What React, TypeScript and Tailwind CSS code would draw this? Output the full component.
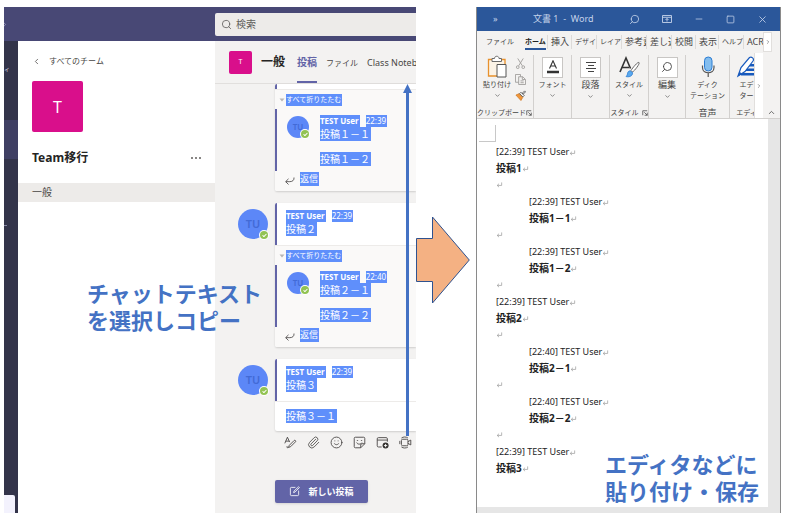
import type { ReactNode } from "react"
import { ChevronDown, ChevronLeft, ChevronRight, ChevronUp, Check, Minus, Paperclip, Search, Smile, Square, X } from "lucide-react"

const selected = "bg-[#5f8ffb] text-white pr-px"

// ---------- Teams ----------

function Avatar({ small = false }: { small?: boolean }) {
    return (
        <div
            className={
                small
                    ? "relative mt-px flex size-[22px] shrink-0 items-center justify-center rounded-full bg-[#5c87f7] text-[8px] font-semibold text-[#426ad6]"
                    : "relative mt-[6px] flex size-[30px] shrink-0 items-center justify-center rounded-full bg-[#5c87f7] text-[11px] font-semibold text-[#426ad6]"
            }
        >
            TU
            <span className="absolute right-0 bottom-0 flex size-2 items-center justify-center rounded-full bg-[#92c353] text-white ring-1 ring-white">
                <Check className="size-[5px]" strokeWidth={5} />
            </span>
        </div>
    )
}

function Message({ time, lines }: { time: string; lines: string[] }) {
    return (
        <div className="whitespace-nowrap">
            <div className="flex h-3 gap-[6px] text-[8px] leading-3">
                <span className={`${selected} font-bold`}>TEST User</span>
                <span className={selected}>{time}</span>
            </div>
            <div className="flex flex-col items-start gap-[11px] text-[10px] leading-[14px]">
                {lines.map((line) => (
                    <span key={line} className={selected}>{line}</span>
                ))}
            </div>
        </div>
    )
}

function Replies({ time, lines }: { time: string; lines: string[] }) {
    return (
        <div className="border-t border-[#edebe9] bg-[#faf9f8]">
            <button className="flex h-[19px] items-center gap-px pl-1 text-[7px] leading-3 whitespace-nowrap">
                <svg viewBox="0 0 6 4" className="w-[6px] fill-[#b8b6b4]"><path d="M0.5 0.5h5L3 3.5z" /></svg>
                <span className={selected}>すべて折りたたむ</span>
            </button>
            <div className="flex gap-[11px] border-l-2 border-[#6264a7] pt-[6px] pb-[5px] pl-[10px]">
                <Avatar small />
                <Message time={time} lines={lines} />
            </div>
            <button className="flex h-5 items-start gap-[5px] pt-px pl-[10px] text-[9px] leading-[14px]">
                <svg viewBox="0 0 12 10" className="mt-1 h-[10px] w-[10px] fill-none stroke-[#484644]" strokeWidth="1">
                    <path d="M10.8 0.8c.4 3.2-1.8 5-5 5H1M4.2 2.4 0.8 5.8l3.4 3.4" />
                </svg>
                <span className={selected}>返信</span>
            </button>
        </div>
    )
}

function Post({ avatar = true, children }: { avatar?: boolean; children: ReactNode }) {
    return (
        <article className="flex gap-[7px] pl-[23px]">
            {avatar ? <Avatar /> : <div className="w-[30px] shrink-0" />}
            <div className="min-w-0 flex-1 overflow-hidden rounded-l-xs bg-white shadow-[0_1px_2px_rgba(0,0,0,0.15)]">
                {children}
            </div>
        </article>
    )
}

function PostHead({ text, time }: { text: string; time: string }) {
    return (
        <div className="h-[42px] border-l-2 border-[#6264a7] pt-[7px] pl-[9px]">
            <Message time={time} lines={[text]} />
        </div>
    )
}

function ComposeTools() {
    const icon = "size-[13px] fill-none stroke-current"
    return (
        <div className="flex gap-[10px] pt-[5px] pl-[69px] text-[#484644]">
            <button aria-label="書式">
                <svg viewBox="0 0 16 16" className={icon} strokeWidth="1.1">
                    <path d="M1 9 4.2 1.5 7 7.5M2.2 6.3h4M6.5 11.5l6-6c.9-.9 2.6.6 1.7 1.6l-6 6-2.6 1zM4 12.5c-1.5 1.6.2 2.4 1.5 1.5" />
                </svg>
            </button>
            <button aria-label="添付"><Paperclip className="size-[13px]" strokeWidth={1.5} /></button>
            <button aria-label="絵文字"><Smile className="size-[13px]" strokeWidth={1.6} /></button>
            <button aria-label="ステッカー">
                <svg viewBox="0 0 16 16" className={icon} strokeWidth="1.1">
                    <path d="M3 1.5h10c1 0 1.5.5 1.5 1.5v6.5l-5 5H3c-1 0-1.5-.5-1.5-1.5V3c0-1 .5-1.5 1.5-1.5zM14.5 9.5H11c-1 0-1.5.5-1.5 1.5v3.5M4.5 8c1 2.5 4.5 2.8 6.5.2" />
                    <path d="M5.5 5v.8M10.5 5v.8" strokeWidth="1.6" />
                </svg>
            </button>
            <button aria-label="会議">
                <svg viewBox="0 0 16 16" className={icon} strokeWidth="1.1">
                    <path d="M7 13.5H3c-1 0-1.5-.5-1.5-1.5V3.5C1.5 2.5 2 2 3 2h9.5c1 0 1.5.5 1.5 1.5V7M1.5 5H14" />
                    <circle cx="11.8" cy="11.8" r="3.7" className="fill-[#33322f] stroke-none" />
                    <path d="M11.8 9.8v4M9.8 11.8h4" className="stroke-white" />
                </svg>
            </button>
            <button aria-label="ビデオ">
                <svg viewBox="0 0 16 16" className={icon} strokeWidth="1.1">
                    <path d="M4.5 4h5c1 0 1.5.5 1.5 1.5v5c0 1-.5 1.5-1.5 1.5h-5c-1 0-1.5-.5-1.5-1.5v-5C3 4.5 3.5 4 4.5 4zM11 7l3.5-2v6L11 9M3 2.5C5 .8 9 .8 11 2.5M3 13.5c2 1.7 6 1.7 8 0M1 6v4" />
                </svg>
            </button>
        </div>
    )
}

function Teams() {
    return (
        <section className="relative flex min-w-0 flex-1 flex-col">
            <header className="flex h-[34px] items-center justify-between overflow-hidden bg-[#484875]">
                <ChevronRight className="-ml-1 size-[9px] text-[#a9a9cc]" />
                <label className="flex h-[23px] w-[201px] items-center gap-1 rounded-l-xs bg-[#edebe9] pl-[6px]">
                    <Search className="size-[11px] shrink-0 text-[#605e5c]" strokeWidth={1.8} />
                    <input aria-label="検索" placeholder="検索" className="min-w-0 flex-1 bg-transparent text-[10px] outline-none placeholder:text-[#605e5c]" />
                </label>
            </header>

            <div className="flex flex-1">
                <nav className="flex w-[14px] shrink-0 flex-col overflow-hidden bg-[#33344a] text-[6px] text-[#c8c8dc]">
                    <div className="h-[79px] pt-[22px] leading-3">ィ</div>
                    <div className="h-[39px] bg-[#3f3f63]" />
                    <div className="mt-[66px] h-px w-[3px] bg-[#8889a5]" />
                    <div className="mt-auto h-[18px] w-[11px] rounded-tr-xs bg-[#f3f2fd]" />
                </nav>

                <aside className="min-w-0 flex-1 bg-white text-[#252423]">
                    <a href="#teams" className="flex h-10 items-center gap-2 pl-[14px] text-[8px] text-[#484644]">
                        <ChevronLeft className="size-[9px]" />
                        すべてのチーム
                    </a>
                    <div className="ml-[14px] flex size-[51px] items-center justify-center rounded-xs bg-[#d90f8b] text-base text-white">T</div>
                    <div className="flex h-[51px] items-center justify-between px-[14px]">
                        <h2 className="text-xs font-bold">Team移行</h2>
                        <button aria-label="その他" className="flex gap-[2px]">
                            <i className="size-[2px] rounded-full bg-[#605e5c]" />
                            <i className="size-[2px] rounded-full bg-[#605e5c]" />
                            <i className="size-[2px] rounded-full bg-[#605e5c]" />
                        </button>
                    </div>
                    <a href="#general" className="flex h-[19px] items-center bg-[#edebe9] pl-[14px] text-[10px] text-[#484644]">一般</a>
                </aside>

                <main className="relative flex w-[201px] shrink-0 flex-col overflow-hidden bg-[#f3f2f1]">
                    <div className="flex h-[43px] items-center border-b border-[#e1dfdd] pl-[14px] whitespace-nowrap">
                        <div className="flex size-[23px] shrink-0 items-center justify-center rounded-xs bg-[#d90f8b] text-[7px] text-white">T</div>
                        <h1 className="ml-[9px] text-xs font-bold text-[#252423]">一般</h1>
                        <nav className="ml-3 flex h-full gap-[9px] text-[9px] text-[#484644]">
                            <a href="#posts" className="flex items-center border-b-2 border-[#6264a7] pt-[3px] text-[10px] font-bold text-[#6264a7]">投稿</a>
                            <a href="#files" className="flex items-center pt-[2px] text-[8px]">ファイル</a>
                            <a href="#notebook" className="flex items-center pt-[2px]">Class Notebook</a>
                        </nav>
                    </div>

                    <div className="flex flex-col gap-3">
                        <Post avatar={false}>
                            <div className="h-[5px] border-l-2 border-[#6264a7]" />
                            <Replies time="22:39" lines={["投稿１－１", "投稿１－２"]} />
                        </Post>
                        <Post>
                            <PostHead text="投稿２" time="22:39" />
                            <Replies time="22:40" lines={["投稿２－１", "投稿２－２"]} />
                        </Post>
                        <Post>
                            <PostHead text="投稿３" time="22:39" />
                            <div className="flex border-t border-[#edebe9] pt-[7px] pb-2 pl-[11px] text-[10px] leading-[14px]">
                                <span className={selected}>投稿３－１</span>
                            </div>
                        </Post>
                    </div>
                    <ComposeTools />

                    <button className="mt-[31px] ml-[60px] flex h-[23px] w-[93px] items-center justify-center gap-2 rounded-xs bg-[#6264a7] text-[9px] font-bold text-white shadow-sm">
                        <svg viewBox="0 0 12 12" className="size-[11px] fill-none stroke-white" strokeWidth="0.9">
                            <path d="M7 1.5H2.5c-.6 0-1 .4-1 1v7c0 .6.4 1 1 1h7c.6 0 1-.4 1-1V5M5 7.2l.5-1.7L10.5.8l.9.9L6.6 6.6z" />
                        </svg>
                        新しい投稿
                    </button>

                    {/* 選択範囲を示す矢印 */}
                    <svg viewBox="0 0 9 352" className="absolute top-[43px] left-[188px] h-[352px] w-[9px] fill-[#4472c4]">
                        <path d="M4.5 0 9 9H6v343H3V9H0z" />
                    </svg>
                </main>
            </div>

            <p className="absolute top-[273px] left-[83px] text-[22px] leading-[27px] font-bold whitespace-nowrap text-[#4472c4]">
                チャットテキスト
                <br />
                を選択しコピー
            </p>
        </section>
    )
}

// ---------- Word ----------

const ribbonTabs = [
    { label: "挿入", style: "w-[24px] text-[9px]" },
    { label: "デザイ", style: "w-[25px] text-[7px]" },
    { label: "レイア", style: "w-[25px] text-[7px]" },
    { label: "参考資", style: "w-[25px] text-[9px]" },
    { label: "差し込", style: "w-[25px] text-[9px]" },
    { label: "校閲", style: "w-[24px] text-[9px]" },
    { label: "表示", style: "w-[23px] text-[9px]" },
    { label: "ヘルプ", style: "w-[25px] text-[7px]" },
    { label: "ACR", style: "w-[21px] text-[9px]" },
]

const documentText = [
    { time: "22:39", text: "投稿1" },
    { time: "22:39", text: "投稿1－1", indent: true },
    { time: "22:39", text: "投稿1－2", indent: true },
    { time: "22:39", text: "投稿2" },
    { time: "22:40", text: "投稿2－1", indent: true },
    { time: "22:40", text: "投稿2－2", indent: true },
    { time: "22:39", text: "投稿3", last: true },
]

function Return() {
    return (
        <svg viewBox="0 0 8 7" className="inline h-[6px] w-[7px] fill-none stroke-[#979797]" strokeWidth="0.8">
            <path d="M6.5 0.5v3.5H1.5M3.5 2 1.3 4l2.2 2" />
        </svg>
    )
}

function Launcher() {
    return (
        <svg viewBox="0 0 8 8" className="size-[6px] shrink-0 fill-none stroke-[#444]" strokeWidth="1">
            <path d="M1 7V1h6M3 3l4 4M7 3.5V7H3.5" />
        </svg>
    )
}

function Group({ width, icon, label, caption, launcher, arrow }: {
    width: string; icon: ReactNode; label: ReactNode; caption?: ReactNode; launcher?: boolean; arrow?: boolean
}) {
    return (
        <div className={`${width} flex shrink-0 flex-col overflow-hidden border-r border-[#d2d0ce]`}>
            <button className="flex flex-col items-center whitespace-nowrap">
                <span className="flex h-[24px] items-center justify-center">{icon}</span>
                <span className="leading-[11px]">{label}</span>
                {arrow && <ChevronDown className="mt-[2px] size-[7px]" />}
            </button>
            <div className="mt-auto flex h-[10px] items-center justify-center gap-[3px] whitespace-nowrap">
                {caption}
                {launcher && <Launcher />}
            </div>
        </div>
    )
}

function Ribbon() {
    const box = "flex size-[21px] items-center justify-center border border-[#c8c6c4] bg-white"
    return (
        <div className="flex h-[66px] border-b border-[#d2d0ce] text-[7px] text-[#444]">
            <div className="flex min-w-0 flex-1 overflow-hidden pt-[2px]">
                {/* クリップボード */}
                <div className="flex w-[57px] shrink-0 flex-col border-r border-[#d2d0ce]">
                    <div className="flex gap-1 pl-[6px]">
                        <button className="flex flex-col items-center whitespace-nowrap">
                            <svg viewBox="0 0 22 24" className="h-[24px] w-[22px] fill-white" strokeWidth="1.3">
                                <path d="M11 21H2.500V4.500H19V9.500" className="fill-[#fbf3e6] stroke-[#e8912d]" />
                                <path d="M6 6.500V3.500h2.500c0-3 4.500-3 4.500 0h2.500v3z" className="stroke-[#6b6b6b]" strokeWidth="1" />
                                <path d="M11 9.500h9v12.500H11z" className="stroke-[#555]" strokeWidth="1" />
                            </svg>
                            <span className="leading-[11px]">貼り付け</span>
                            <ChevronDown className="mt-[2px] size-[7px]" />
                        </button>
                        <div className="flex flex-col items-center gap-[5px] pt-[3px]">
                            <button aria-label="切り取り">
                                <svg viewBox="0 0 12 12" className="size-[11px] fill-none stroke-[#a19f9d]" strokeWidth="1">
                                    <path d="M3 .5 8 8.5M9 .5 4 8.5" />
                                    <circle cx="3" cy="10" r="1.5" />
                                    <circle cx="9" cy="10" r="1.5" />
                                </svg>
                            </button>
                            <button aria-label="コピー">
                                <svg viewBox="0 0 12 12" className="size-[11px] fill-[#f3f2f1] stroke-[#a19f9d]" strokeWidth="1">
                                    <path d="M.5.5h5.5v8.5H.5z" />
                                    <path d="M4 3h4.5L11.5 6v5.5H4zM8 3v3h3M6 7.5h3.5M6 9.5h3.5" />
                                </svg>
                            </button>
                            <button aria-label="書式のコピー">
                                <svg viewBox="0 0 12 12" className="size-[11px]">
                                    <path d="M1 5.5 4.5 4 8.5 8 6.5 11.5z" className="fill-[#f0963a] stroke-[#c96d13]" strokeWidth=".7" />
                                    <path d="m5 4 1.5-1.5 3.5 3.5L8.5 7.5zM8 3.5 10.5 1 11.5 2 9 4.5z" className="fill-white stroke-[#444]" strokeWidth=".9" />
                                </svg>
                            </button>
                        </div>
                    </div>
                    <div className="mt-auto flex h-[10px] items-center justify-between pr-px whitespace-nowrap">
                        クリップボード
                        <Launcher />
                    </div>
                </div>

                <Group width="w-[38px]" label="フォント" arrow icon={
                    <span className={box}>
                        <svg viewBox="0 0 14 14" className="size-[14px] fill-none stroke-[#333]">
                            <path d="M3.5 8.5 7 .8l3.5 7.7M4.7 6h4.6" strokeWidth="1.1" />
                            <path d="M1 12h12" strokeWidth="2.5" />
                        </svg>
                    </span>
                } />
                <Group width="w-[38px]" label={<span className="text-[9px]">段落</span>} arrow icon={
                    <span className={box}>
                        <svg viewBox="0 0 12 12" className="size-3 fill-none stroke-[#444]"><path d="M1 1.5h10M3 4.5h6M1 7.5h10M3 10.5h6" /></svg>
                    </span>
                } />
                <Group width="w-[39px]" label="スタイル" caption="スタイル" launcher arrow icon={
                    <svg viewBox="0 0 22 22" className="size-[22px] fill-none">
                        <path d="M2 16 8 2l4.500 10.500M4.500 11.500H11" className="stroke-[#333]" strokeWidth="1.600" />
                        <path d="M21 6.500c1.200 1-4.500 8.500-6.500 9.500L13 14.500c1.500-2.500 6.800-9 8-8z" className="fill-white stroke-[#555]" strokeWidth=".9" />
                        <path d="M8 20.500c2 .8 7 .2 6.500-4L12 14.800C8.500 15.500 10.500 18.500 8 20.500z" className="fill-[#5aa9ee] stroke-[#2b7cd3]" strokeWidth=".8" />
                    </svg>
                } />
                <Group width="w-[37px]" label={<span className="text-[9px]">編集</span>} arrow icon={
                    <span className={box}><Search className="size-3 -scale-x-100" strokeWidth={1.8} /></span>
                } />
                <Group width="w-[44px]" label={<>ディク<br />テーション</>} caption={<span className="text-[9px]">音声</span>} icon={
                    <svg viewBox="0 0 14 22" className="h-[22px] w-[14px] fill-none">
                        <rect x="3.5" y="1" width="7.5" height="14" rx="3.700" className="fill-[#83bdee] stroke-[#2b7cd3]" />
                        <path d="M1.500 9.500v2c0 7 11.500 7 11.500 0v-2M7.200 17v4" className="stroke-[#555]" strokeWidth="1.200" />
                    </svg>
                } />
                <Group width="w-[34px]" label={<>エデ<br />ター</>} caption="エディ" icon={
                    <svg viewBox="0 0 22 22" className="size-[22px]">
                        <path d="M13 8h9v2.500H12zM10 12.500h12V15H9zM5 17h17v2.500H5z" className="fill-[#185abd]" />
                        <path d="M2 20 5 11.500 13.500 1.500c2-1.200 5 1 3.500 3.500L9 15.500z" className="fill-white stroke-[#185abd]" strokeWidth="1.200" />
                        <path d="m2 20 1.500-4.500L6 18z" className="fill-[#185abd]" />
                    </svg>
                } />
            </div>
            <button aria-label="右へ" className="flex w-[9px] items-center justify-center border-l border-[#e1dfdd] bg-white">
                <ChevronRight className="size-[6px]" />
            </button>
            <div className="flex w-[17px] items-end justify-center pb-px">
                <button aria-label="リボンを折りたたむ"><ChevronUp className="size-[9px]" /></button>
            </div>
        </div>
    )
}

function Word() {
    return (
        <section className="relative flex w-[305px] shrink-0 flex-col border-x border-[#8a8a8a] bg-[#f3f2f1]">
            <header className="flex h-[24px] items-center bg-[#2b579a] text-[9px] text-[#c5d3ea]">
                <span className="w-[56px] pl-4">»</span>
                <h1 className="flex-1 whitespace-pre">文書 1  -  Word</h1>
                <div className="flex items-center gap-[22px] pr-3">
                    <button aria-label="検索"><Search className="size-[11px] -scale-x-100" strokeWidth={1.8} /></button>
                    <button aria-label="リボンの表示オプション">
                        <svg viewBox="0 0 10 8" className="w-[10px] fill-none stroke-current" strokeWidth=".9"><path d="M.5.5h9v7h-9zM.5 2.3h9M5 6.5V3.5M3.5 5 5 3.5 6.5 5" /></svg>
                    </button>
                    <button aria-label="最小化"><Minus className="size-[10px]" strokeWidth={1.8} /></button>
                    <button aria-label="最大化"><Square className="size-[9px]" strokeWidth={2} /></button>
                    <button aria-label="閉じる"><X className="size-[11px]" strokeWidth={1.8} /></button>
                </div>
            </header>

            <nav className="flex h-[22px] items-center whitespace-nowrap text-[#444]">
                <a href="#file" className="w-[45px] pl-[9px] text-[7px]">ファイル</a>
                <a href="#home" className="mr-px w-[24px] pl-[3px] text-[7px] font-bold text-[#222]">
                    <span className="block border-b-2 border-[#2b579a] pt-[2px] leading-3">ホーム</span>
                </a>
                <div className="flex min-w-0 flex-1">
                    {ribbonTabs.map((tab) => (
                        <a key={tab.label} href={`#${tab.label}`} className={`${tab.style} shrink-0 overflow-hidden border-l border-[#dddbd9] pl-[3px] leading-[14px]`}>
                            {tab.label}
                        </a>
                    ))}
                </div>
                <button aria-label="次のタブ" className="mr-2 flex h-5 w-[9px] items-center justify-center border border-[#e1dfdd] bg-white">
                    <ChevronRight className="size-[6px]" />
                </button>
            </nav>

            <Ribbon />

            <div className="flex flex-1 flex-col bg-[#e6e6e6] pr-3 pb-[6px]">
                <div className="flex-1 bg-white pl-[2px] text-[9px] leading-4 text-[#222]">
                    <div className="mt-[6px] mb-[2px] h-[17px] w-[17px] border-r border-b border-[#c8c8c8]" />
                    {documentText.map((item, i) => (
                        <div key={i} className="mb-[2px] pl-[17px] whitespace-nowrap">
                            <div className={item.indent ? "pl-[33px]" : ""}>
                                <p>[{item.time}] TEST User<Return /></p>
                                <p className="h-4 text-[10px] font-bold">{item.text}<Return /></p>
                            </div>
                            {!item.last && <p><Return /></p>}
                        </div>
                    ))}
                </div>
            </div>

            <p className="absolute right-[21px] bottom-[8px] text-[22px] leading-[27px] font-bold whitespace-nowrap text-[#4472c4]">
                エディタなどに
                <br />
                貼り付け・保存
            </p>
        </section>
    )
}

export default function App() {
    return (
        <div className="flex min-h-screen bg-white py-[7px] pr-[10px] pl-1 font-['Noto_Sans','Noto_Sans_CJK_JP',sans-serif]">
            <Teams />
            <div className="mr-[6px] flex w-[54px] shrink-0 items-center">
                <svg viewBox="0 0 54 88" className="h-[88px] w-[54px] fill-[#f4b183] stroke-[#2f528f]" strokeWidth="1">
                    <path d="M.5 22.5H16.5V1L53.3 44 16.5 87V65.5H.5z" />
                </svg>
            </div>
            <Word />
        </div>
    )
}
